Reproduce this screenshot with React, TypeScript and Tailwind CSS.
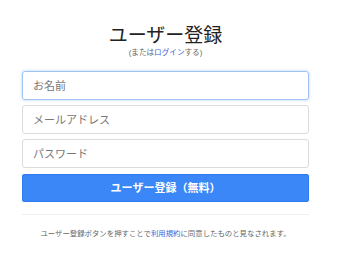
export default function App() {
  return (
    <div
      className="w-[340px] h-[262px] bg-white overflow-hidden"
      style={{ fontFamily: '"Liberation Sans", "Noto Sans CJK JP", sans-serif' }}
    >
      <div className="ml-[22px] w-[287px] pt-[25px] flex flex-col">
        <h1 className="text-center text-[19px] leading-[22px] text-[#222] font-normal">
          ユーザー登録
        </h1>
        <p className="mt-[1px] text-center text-[7.6px] leading-[10px] text-[#666]">
          (または<a className="text-[#4461d8]">ログイン</a>する)
        </p>

        {/* フォーム */}
        <div className="mt-[13px] flex flex-col gap-[5px]">
          <input
            placeholder="お名前"
            className="h-[29px] w-full rounded-[3px] border border-[#9fc3f2] px-[10px] text-[11px] outline-none shadow-[0_0_3px_rgba(100,160,240,0.5)] placeholder:text-[#777]"
          />
          <input
            placeholder="メールアドレス"
            className="h-[29px] w-full rounded-[3px] border border-[#dcdcdc] px-[10px] text-[11px] outline-none placeholder:text-[#777]"
          />
          <input
            placeholder="パスワード"
            className="h-[29px] w-full rounded-[3px] border border-[#dcdcdc] px-[10px] text-[11px] outline-none placeholder:text-[#777]"
          />
        </div>
        <button className="mt-[6px] h-[28px] w-full rounded-[2px] bg-[#3c87f7] border border-[#2f7cf0] text-white text-[11px] font-bold">
          ユーザー登録（無料）
        </button>

        <div className="mt-[12px] h-px bg-[#eeeeee]" />

        <p className="mt-[13px] text-center text-[7.4px] leading-[12px] text-[#666]">
          ユーザー登録ボタンを押すことで<a className="text-[#4461d8]">利用規約</a>に同意したものと見なされます。
        </p>
      </div>
    </div>
  );
}
